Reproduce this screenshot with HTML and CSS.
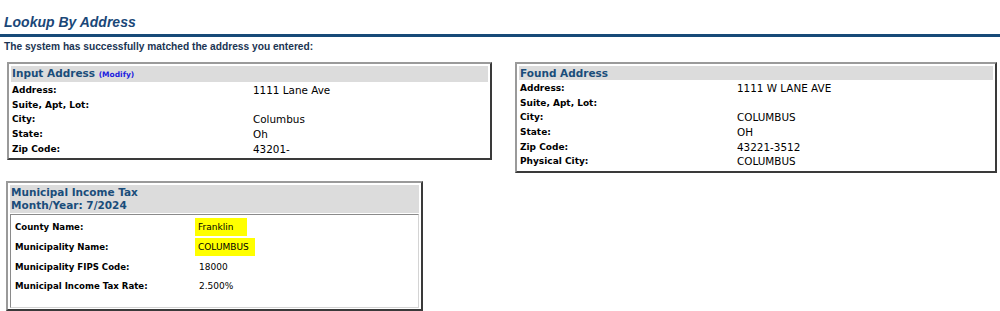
FILE: index.html
```html
<!DOCTYPE html>
<html>
<head>
    <meta charset="UTF-8">
    <title>Lookup By Address</title>
    <link rel="stylesheet" href="styles.css">
</head>
<body>
    <h1 class="page-title">Lookup By Address</h1>
    <p class="intro">The system has successfully matched the address you entered:</p>

    <div class="address-row">
        <div class="box box-input">
            <div class="box-header">Input Address <a href="#" class="modify">(Modify)</a></div>
            <table class="addr-table input-table">
                <tr><th>Address:</th><td>1111 Lane Ave</td></tr>
                <tr><th>Suite, Apt, Lot:</th><td></td></tr>
                <tr><th>City:</th><td>Columbus</td></tr>
                <tr><th>State:</th><td>Oh</td></tr>
                <tr><th>Zip Code:</th><td>43201-</td></tr>
            </table>
        </div>

        <div class="box box-found">
            <div class="box-header">Found Address</div>
            <table class="addr-table found-table">
                <tr><th>Address:</th><td>1111 W LANE AVE</td></tr>
                <tr><th>Suite, Apt, Lot:</th><td></td></tr>
                <tr><th>City:</th><td>COLUMBUS</td></tr>
                <tr><th>State:</th><td>OH</td></tr>
                <tr><th>Zip Code:</th><td>43221-3512</td></tr>
                <tr><th>Physical City:</th><td>COLUMBUS</td></tr>
            </table>
        </div>
    </div>

    <div class="box box-tax">
        <div class="box-header">Municipal Income Tax<br>Month/Year: 7/2024</div>
        <div class="tax-inner">
            <table class="tax-table">
                <tr><th>County Name:</th><td><span class="hl hl-wide">Franklin</span></td></tr>
                <tr><th>Municipality Name:</th><td><span class="hl">COLUMBUS</span></td></tr>
                <tr><th>Municipality FIPS Code:</th><td>18000</td></tr>
                <tr><th>Municipal Income Tax Rate:</th><td>2.500%</td></tr>
            </table>
        </div>
    </div>
</body>
</html>
```

FILE: styles.css
```css
body {
    margin: 0;
    font-family: "DejaVu Sans", Verdana, sans-serif;
    color: #000;
    background: #fff;
}

.page-title {
    margin: 0;
    padding: 13px 0 3px 4px;
    font-family: "Liberation Sans", Arial, sans-serif;
    font-size: 14px;
    font-weight: bold;
    font-style: italic;
    line-height: 18px;
    color: #1a4778;
    border-bottom: 3px solid #174a78;
}

.intro {
    margin: 0;
    padding: 4px 0 0 4px;
    font-family: "Liberation Sans", Arial, sans-serif;
    font-size: 10.2px;
    font-weight: bold;
    line-height: 12px;
    color: #1b3553;
}

.address-row {
    display: flex;
    align-items: flex-start;
    padding: 9px 3px 0 7px;
    gap: 23px;
}

.box {
    border: 2px solid;
    border-color: #9a9a9a #3a3a3a #3a3a3a #9a9a9a;
    padding: 2px;
    background: #fff;
}

.box-input {
    box-sizing: border-box;
    width: 485px;
}

.box-found {
    box-sizing: border-box;
    width: 482px;
}

.box-header {
    background: #dcdcdc;
    color: #1a4d7a;
    font-size: 10.5px;
    font-weight: bold;
    line-height: 14px;
    padding: 0 1px;
}

.modify {
    color: #1c1ce0;
    font-size: 7.5px;
    text-decoration: none;
}

.addr-table {
    width: 100%;
    margin-top: 1px;
    border-collapse: collapse;
    font-size: 9px;
    line-height: 12px;
}

.addr-table th,
.addr-table td {
    padding: 0 0 0 1px;
    text-align: left;
    vertical-align: middle;
    height: 14.6px;
}

.addr-table th {
    font-weight: bold;
}

.addr-table td {
    font-size: 10.4px;
}

.input-table th {
    width: 240px;
}

.found-table th {
    width: 216px;
}

.box-tax {
    box-sizing: border-box;
    width: 417px;
    margin: 8px 0 0 6px;
    padding-bottom: 1px;
}

.box-tax .box-header {
    line-height: 13.5px;
    padding: 1px 1px 0;
}

.tax-inner {
    margin-top: 1px;
    border: 1px solid;
    border-color: #8a8a8a #d4d4d4 #d4d4d4 #8a8a8a;
    padding: 3px 4px 8px 4px;
    height: 81px;
}

.tax-table {
    border-collapse: collapse;
    font-size: 8.6px;
    line-height: 12px;
}

.tax-table th,
.tax-table td {
    padding: 0;
    height: 19.6px;
    text-align: left;
    vertical-align: middle;
}

.tax-table th {
    width: 184px;
    font-weight: bold;
}

.tax-table td {
    font-size: 9px;
}

.hl {
    display: inline-block;
    background: #ffff00;
    padding: 3px 6px 3px 3px;
    margin-left: -4px;
}

.hl-wide {
    padding-right: 14px;
}
```
